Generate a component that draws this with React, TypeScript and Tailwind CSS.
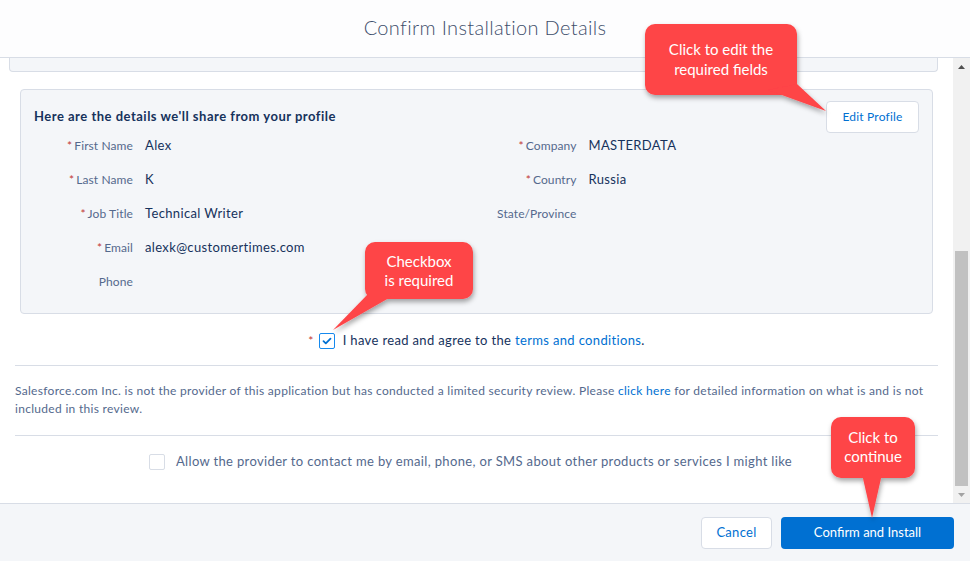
import React from "react";

const leftFields = [
  { label: "First Name", value: "Alex", required: true },
  { label: "Last Name", value: "K", required: true },
  { label: "Job Title", value: "Technical Writer", required: true },
  { label: "Email", value: "alexk@customertimes.com", required: true },
  { label: "Phone", value: "", required: false },
];

const rightFields = [
  { label: "Company", value: "MASTERDATA", required: true },
  { label: "Country", value: "Russia", required: true },
  { label: "State/Province", value: "", required: false },
];

type Field = { label: string; value: string; required: boolean };

const FieldRow = ({ field, labelWidth }: { field: Field; labelWidth: string }) => (
  <div className="flex h-[34px] items-center gap-[12px]">
    <div className={`${labelWidth} shrink-0 text-right text-[12px] tracking-[0.1px] text-[#54698d]`}>
      {field.required && <span className="mr-[2px] text-[#c23934]">*</span>}
      {field.label}
    </div>
    <div className="text-[13px] tracking-[0.35px] text-[#16325c]">{field.value}</div>
  </div>
);

const Callouts = () => (
  <>
    <svg className="pointer-events-none absolute left-0 top-0" width="970" height="561">
      <defs>
        <filter id="shadow" x="-20%" y="-20%" width="140%" height="150%">
          <feDropShadow dx="1" dy="3" stdDeviation="2.5" floodColor="#000" floodOpacity="0.35" />
        </filter>
      </defs>
      <g fill="#fe4447" filter="url(#shadow)">
        <rect x="645" y="24" width="152" height="71" rx="10" />
        <polygon points="768,90 797,84 826,111" />
        <rect x="365" y="242" width="108" height="57" rx="10" />
        <polygon points="368,294 396,294 333,330" />
        <rect x="831" y="417" width="84" height="61" rx="10" />
        <polygon points="862,474 882,474 872,518" />
      </g>
    </svg>
    <div className="pointer-events-none absolute left-[645px] top-[39px] w-[152px] text-center text-[15px] leading-[20px] text-white">
      Click to edit the
      <br />
      required fields
    </div>
    <div className="pointer-events-none absolute left-[365px] top-[252px] w-[108px] text-center text-[15px] leading-[19px] text-white">
      Checkbox
      <br />
      is required
    </div>
    <div className="pointer-events-none absolute left-[831px] top-[428px] w-[84px] text-center text-[15px] leading-[19px] text-white">
      Click to
      <br />
      continue
    </div>
  </>
);

export default function App() {
  return (
    <div className="relative flex h-[561px] w-[970px] flex-col overflow-hidden bg-white font-['Lato',sans-serif]">
      {/* Header */}
      <div className="flex h-[58px] shrink-0 items-center justify-center border-b border-[#d8dde6] bg-[#fdfdfe] pb-[4px]">
        <h1 className="text-[20px] font-light tracking-[0.35px] text-[#3e4e6b]">Confirm Installation Details</h1>
      </div>

      {/* Body */}
      <div className="flex min-h-0 flex-1">
        <div className="flex-1 overflow-hidden px-[15px]">
          <div className="-ml-[6px] h-[14px] rounded-b-[4px] border-x border-b border-[#d8dde6] bg-[#f4f6f9]" />

          <div className="mx-[5px] mt-[17px] rounded-[4px] border border-[#d8dde6] bg-[#f4f6f9] px-[13px] pb-[14px] pt-[17px]">
            <div className="flex h-[20px] items-center justify-between">
              <h2 className="text-[13px] font-bold tracking-[0.5px] text-[#16325c]">
                Here are the details we'll share from your profile
              </h2>
              <button className="h-[32px] w-[93px] rounded-[4px] border border-[#d8dde6] bg-white text-[12px] tracking-[0.2px] text-[#0070d2]">
                Edit Profile
              </button>
            </div>
            <div className="grid grid-cols-2 pt-[2px]">
              <div>
                {leftFields.map((f) => (
                  <FieldRow key={f.label} field={f} labelWidth="w-[99px]" />
                ))}
              </div>
              <div>
                {rightFields.map((f) => (
                  <FieldRow key={f.label} field={f} labelWidth="w-[100px]" />
                ))}
              </div>
            </div>
          </div>

          <div className="mt-[18px] flex h-[18px] items-center justify-center text-[13px] tracking-[0.35px] text-[#16325c]">
            <span className="mr-[5px] text-[12px] text-[#c23934]">*</span>
            <span className="mr-[8px] flex h-[16px] w-[16px] items-center justify-center rounded-[2px] border border-[#1589ee] bg-white">
              <svg width="10" height="8" viewBox="0 0 10 8">
                <path d="M1.5 4.2 L3.8 6.3 L8.5 1.6" fill="none" stroke="#0070d2" strokeWidth="1.8" strokeLinecap="round" strokeLinejoin="round" />
              </svg>
            </span>
            <span>
              I have read and agree to the <span className="text-[#0070d2]">terms and conditions</span>.
            </span>
          </div>

          <div className="mt-[15px] border-t border-[#d8dde6]" />

          <p className="mt-[16px] text-[12px] leading-[18px] tracking-[0.3px] text-[#54698d]">
            Salesforce.com Inc. is not the provider of this application but has conducted a limited security review. Please{" "}
            <span className="text-[#0070d2]">click here</span> for detailed information on what is and is not included in this review.
          </p>

          <div className="mt-[17px] border-t border-[#d8dde6]" />

          <div className="mt-[17px] flex h-[18px] items-center justify-center pr-[12px] text-[13px] tracking-[0.35px] text-[#54698d]">
            <span className="mr-[11px] h-[16px] w-[16px] rounded-[2px] border border-[#d8dde6] bg-white" />
            Allow the provider to contact me by email, phone, or SMS about other products or services I might like
          </div>
        </div>

        {/* Scrollbar */}
        <div className="flex w-[17px] shrink-0 flex-col items-center bg-[#f1f1f1]">
          <div className="flex h-[17px] w-full items-center justify-center">
            <svg width="7" height="4" viewBox="0 0 7 4">
              <polygon points="0,4 3.5,0 7,4" fill="#505050" />
            </svg>
          </div>
          <div className="mt-[176px] h-[235px] w-[13px] bg-[#c1c1c1]" />
          <div className="mt-auto flex h-[17px] w-full items-center justify-center">
            <svg width="7" height="4" viewBox="0 0 7 4">
              <polygon points="0,0 7,0 3.5,4" fill="#a3a3a3" />
            </svg>
          </div>
        </div>
      </div>

      {/* Footer */}
      <div className="flex h-[58px] shrink-0 items-center justify-end gap-[9px] border-t border-[#d8dde6] bg-[#f4f6f9] pr-[16px]">
        <button className="h-[32px] w-[71px] rounded-[4px] border border-[#d8dde6] bg-white text-[13px] tracking-[0.3px] text-[#0070d2]">
          Cancel
        </button>
        <button className="h-[32px] w-[173px] rounded-[4px] bg-[#0070d2] text-[13px] text-white">
          Confirm and Install
        </button>
      </div>

      <Callouts />
    </div>
  );
}
